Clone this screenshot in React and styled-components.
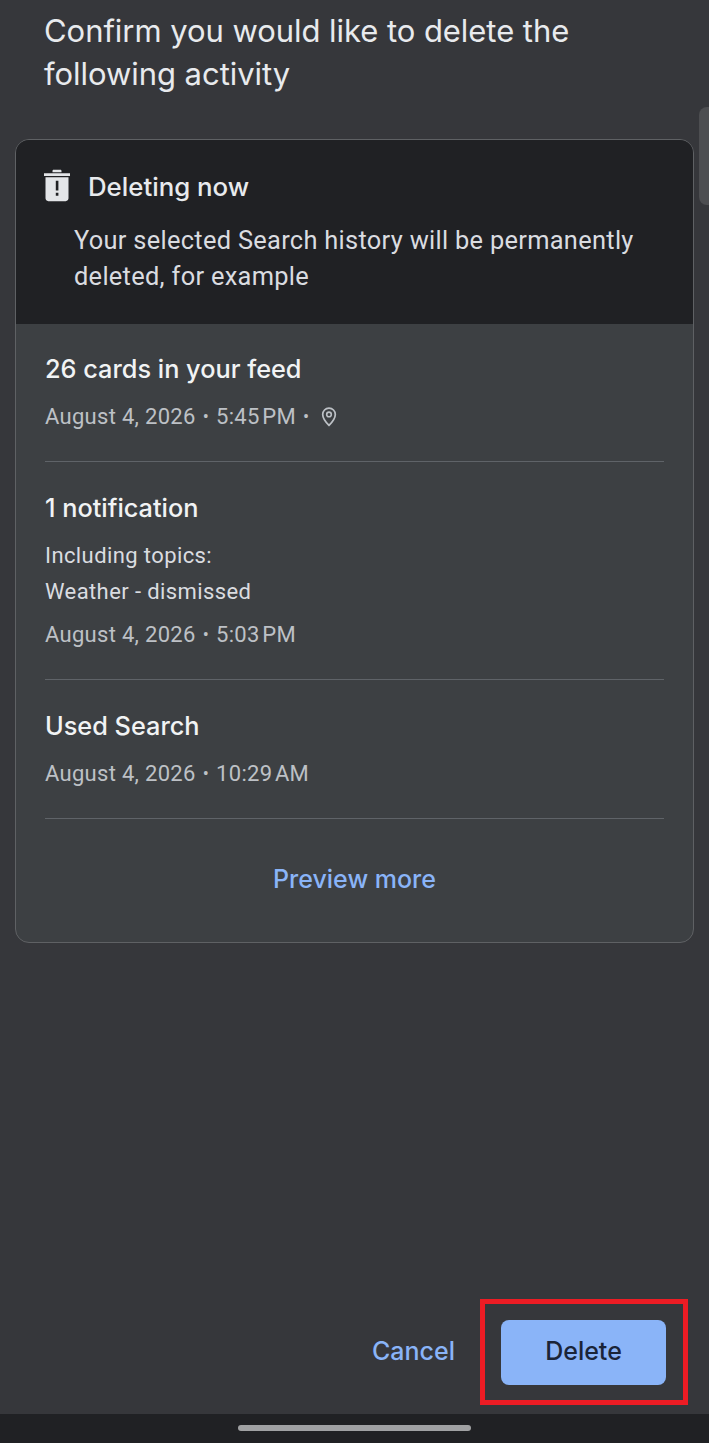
import React from "react";
import styled, { createGlobalStyle } from "styled-components";

const GlobalStyle = createGlobalStyle`
  html, body {
    margin: 0;
    padding: 0;
    background: #36373b;
  }
  * {
    box-sizing: border-box;
  }
`;

function TrashIcon() {
  return (
    <svg width="26" height="33" viewBox="1 2 26 31.300">
      <path fill="#e3e5e8" d="M1 5.500h26v2.600H1zM9.500 3.200c0-.7.500-1.200 1.200-1.200h6.600c.7 0 1.200.5 1.200 1.200v1.300h-9z" />
      <path
        fill="#e3e5e8"
        fillRule="evenodd"
        d="M2.500 9.500h23v21c0 1.600-1.200 2.800-2.800 2.800H5.300c-1.600 0-2.800-1.200-2.800-2.800zM12.800 13v9.600h2.600V13zm0 12v2.800h2.600V25z"
      />
    </svg>
  );
}

function PinIcon() {
  return (
    <svg width="16" height="20" viewBox="0 0 16 20" fill="none">
      <path
        stroke="#bdc1c6"
        strokeWidth="1.700"
        d="M8 1.200c3.600 0 6.300 2.700 6.300 6.200 0 3.700-3 7.600-6.300 11-3.300-3.400-6.300-7.300-6.300-11C1.700 3.900 4.400 1.200 8 1.200z"
      />
      <circle cx="8" cy="7.400" r="2.300" stroke="#bdc1c6" strokeWidth="1.600" />
    </svg>
  );
}

export default function App() {
  return (
    <>
      <GlobalStyle />
      <Screen>
        <ScrollThumb />
        <Content>
          <Title>
            Confirm you would like to delete the
            <br />
            following activity
          </Title>
          <Card>
            <CardHeader>
              <HeaderTop>
                <TrashIcon />
                <HeaderTitle>Deleting now</HeaderTitle>
              </HeaderTop>
              <HeaderText>
                Your selected Search history will be permanently
                <br />
                deleted, for example
              </HeaderText>
            </CardHeader>
            <CardBody>
              <Row>
                <RowTitle>26 cards in your feed</RowTitle>
                <Meta>
                  August 4, 2026<Dot>•</Dot>5:45{"\u200a"}PM<Dot>•</Dot>
                  <PinIcon />
                </Meta>
              </Row>
              <Row>
                <RowTitle>1 notification</RowTitle>
                <Topics>
                  Including topics:
                  <br />
                  Weather - dismissed
                </Topics>
                <Meta $tight>
                  August 4, 2026<Dot>•</Dot>5:03{"\u200a"}PM
                </Meta>
              </Row>
              <Row>
                <RowTitle>Used Search</RowTitle>
                <Meta>
                  August 4, 2026<Dot>•</Dot>10:29{"\u200a"}AM
                </Meta>
              </Row>
              <PreviewMore>Preview more</PreviewMore>
            </CardBody>
          </Card>
        </Content>
        <Footer>
          <CancelButton>Cancel</CancelButton>
          <DeleteButton>Delete</DeleteButton>
        </Footer>
        <NavBar>
          <HomePill />
        </NavBar>
      </Screen>
    </>
  );
}

const Screen = styled.div`
  position: relative;
  width: 709px;
  height: 1443px;
  overflow: hidden;
  display: flex;
  flex-direction: column;
  background: #36373b;
  font-family: Roboto, "Liberation Sans", sans-serif;
`;

const ScrollThumb = styled.div`
  position: absolute;
  top: 107px;
  right: 0;
  width: 10px;
  height: 98px;
  background: #4d4e51;
  border-radius: 8px 0 0 8px;
`;

const Content = styled.main`
  flex: 1;
  padding: 9px 15px 0;
`;

const Title = styled.h1`
  margin: 0 0 44px 29px;
  font-family: Inter, "Open Sans", sans-serif;
  font-size: 31px;
  font-weight: 400;
  line-height: 43px;
  letter-spacing: -0.050px;
  color: #e8eaed;
  white-space: nowrap;
`;

const Card = styled.section`
  width: 679px;
  height: 804px;
  border: 1.500px solid #5f6164;
  border-radius: 14px;
  overflow: hidden;
  background: #3d4043;
`;

const CardHeader = styled.div`
  height: 184px;
  padding: 28px 30px 0 28px;
  background: #202124;
`;

const HeaderTop = styled.div`
  display: flex;
  align-items: center;
  gap: 18px;
  height: 36px;

  svg {
    margin-top: -2px;
  }
`;

const HeaderTitle = styled.h2`
  margin: 0;
  font-family: Inter, "Open Sans", sans-serif;
  font-size: 25.800px;
  font-weight: 500;
  color: #e8eaed;
`;

const HeaderText = styled.p`
  margin: 18px 0 0 30px;
  font-size: 25.400px;
  line-height: 36px;
  letter-spacing: 0.300px;
  color: #dadce0;
  white-space: nowrap;
`;

const CardBody = styled.div`
  padding: 0 29px;
`;

const Row = styled.div`
  padding: 28px 0 27px;
  border-bottom: 1px solid #5f6368;

  &:first-child {
    padding-top: 27px;
  }
`;

const RowTitle = styled.h3`
  margin: 0;
  font-family: Inter, "Open Sans", sans-serif;
  font-size: 25.300px;
  font-weight: 500;
  line-height: 36px;
  color: #f1f3f4;
`;

const Topics = styled.p`
  margin: 12px 0 0;
  font-size: 22px;
  line-height: 36px;
  letter-spacing: 0.400px;
  color: #dadce0;
`;

const Meta = styled.div`
  display: flex;
  align-items: center;
  height: 36px;
  margin-top: ${(p) => (p.$tight ? "6px" : "11px")};
  font-size: 22px;
  letter-spacing: 0.300px;
  color: #bdc1c6;
  white-space: pre;

  svg {
    margin-left: 5px;
    margin-top: 2px;
  }
`;

const Dot = styled.span`
  margin: 0 7px;
  font-size: 18px;
`;

const PreviewMore = styled.button`
  display: block;
  width: 100%;
  margin-top: 40px;
  padding: 0;
  border: 0;
  background: none;
  font-family: Inter, "Open Sans", sans-serif;
  font-size: 25px;
  font-weight: 500;
  line-height: 40px;
  color: #8ab4f8;
  text-align: center;
`;

const Footer = styled.footer`
  display: flex;
  justify-content: flex-end;
  align-items: center;
  gap: 46px;
  padding: 0 43px 29px 0;
`;

const CancelButton = styled.button`
  padding: 0 0 4px;
  border: 0;
  background: none;
  font-family: Inter, "Open Sans", sans-serif;
  font-size: 25px;
  font-weight: 500;
  color: #8ab4f8;
`;

const DeleteButton = styled.button`
  position: relative;
  width: 165px;
  height: 65px;
  padding: 0 0 4px;
  border: 0;
  border-radius: 8px;
  background: #8ab4f8;
  font-family: Inter, "Open Sans", sans-serif;
  font-size: 25px;
  font-weight: 500;
  color: #1a2438;

  &::after {
    content: "";
    position: absolute;
    top: -21px;
    right: -22px;
    bottom: -20px;
    left: -21px;
    border: 5px solid #ed1c24;
  }
`;

const NavBar = styled.nav`
  display: flex;
  justify-content: center;
  align-items: flex-start;
  height: 29px;
  padding-top: 11px;
  background: #202124;
`;

const HomePill = styled.div`
  width: 233px;
  height: 6px;
  border-radius: 3px;
  background: #a0a1a3;
`;
